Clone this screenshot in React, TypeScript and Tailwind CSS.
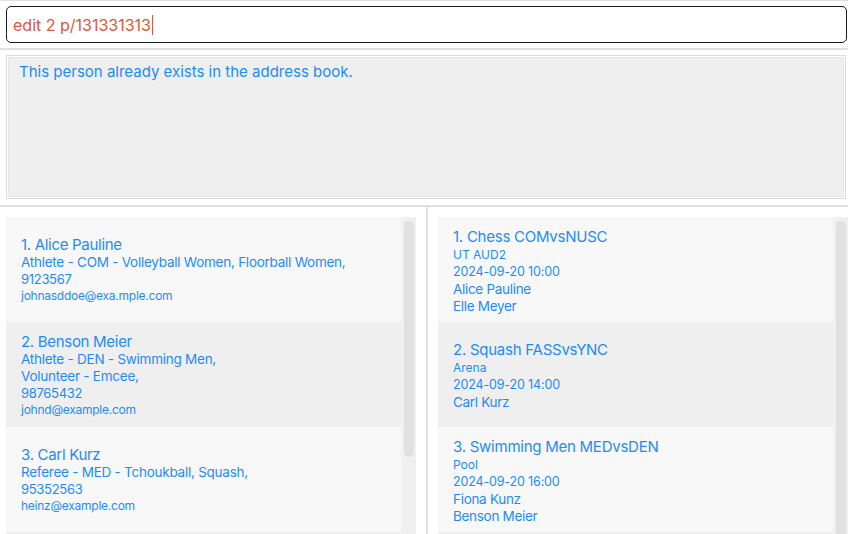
const persons = [
  {
    name: '1. Alice Pauline',
    roles: ['Athlete - COM - Volleyball Women, Floorball Women,'],
    phone: '9123567',
    email: 'johnasddoe@exa.mple.com',
  },
  {
    name: '2. Benson Meier',
    roles: ['Athlete - DEN - Swimming Men,', 'Volunteer - Emcee,'],
    phone: '98765432',
    email: 'johnd@example.com',
  },
  {
    name: '3. Carl Kurz',
    roles: ['Referee - MED - Tchoukball, Squash,'],
    phone: '95352563',
    email: 'heinz@example.com',
  },
];

const events = [
  {
    title: '1. Chess COMvsNUSC',
    venue: 'UT AUD2',
    time: '2024-09-20 10:00',
    people: ['Alice Pauline', 'Elle Meyer'],
  },
  {
    title: '2. Squash FASSvsYNC',
    venue: 'Arena',
    time: '2024-09-20 14:00',
    people: ['Carl Kurz'],
  },
  {
    title: '3. Swimming Men MEDvsDEN',
    venue: 'Pool',
    time: '2024-09-20 16:00',
    people: ['Fiona Kunz', 'Benson Meier'],
  },
];

const Scrollbar = ({ thumb }: { thumb: string }) => (
  <div className="w-[15px] shrink-0 bg-[#f0f0f0] pt-[4px] pl-[3px]">
    <div className={`w-[10px] rounded-[5px] bg-[#e0e0e0] ${thumb}`} />
  </div>
);

export default function App() {
  return (
    <div
      className="w-[848px] h-[534px] overflow-hidden bg-white flex flex-col text-[#1e8cf5]"
      style={{ fontFamily: 'Inter, "Noto Sans", sans-serif' }}
    >
      <div className="h-[1px] bg-[#e0e0e0]" />

      {/* command box */}
      <div className="pt-[5px] pl-[6px] pr-[1px]">
        <div className="h-[37px] rounded-[5px] border border-[#1a1a1a] bg-white flex items-center pl-[6px]">
          <span className="text-[16px] text-[#d75a40]">edit 2 p/131331313</span>
          <span className="ml-[1px] w-[1px] h-[20px] bg-[#d75a40]" />
        </div>
      </div>

      <div className="mt-[5px] h-[2px] bg-[#e0e0e0]" />

      {/* result display */}
      <div className="pt-[5px] pl-[6px] pr-[2px]">
        <div className="h-[144px] border border-[#dcdcdc] p-[1px]">
          <div className="h-full bg-[#efefef] border border-[#e6e6e6] px-[10px] pt-[3px] text-[15px]">
            This person already exists in the address book.
          </div>
        </div>
      </div>

      <div className="mt-[6px] h-[2px] bg-[#e0e0e0]" />

      {/* lists */}
      <div className="flex flex-1 min-h-0">
        <div className="w-[426px] pt-[10px] pl-[6px] pr-[10px] flex">
          <div className="flex-1 flex flex-col">
            {persons.map((p, i) => (
              <div
                key={p.name}
                className={`h-[105px] shrink-0 flex flex-col justify-center pl-[15px] ${i % 2 === 0 ? 'bg-[#f8f8f8]' : 'bg-[#efefef]'}`}
              >
                <div className="text-[15px] leading-[19px] tracking-[-0.3px]">{p.name}</div>
                {p.roles.map((r) => (
                  <div key={r} className="text-[13.5px] leading-[17px] tracking-[-0.25px]">{r}</div>
                ))}
                <div className="text-[13px] leading-[16px] tracking-[-0.3px]">{p.phone}</div>
                <div className="text-[12px] leading-[17px] tracking-[-0.25px]">{p.email}</div>
              </div>
            ))}
            <div className="flex-1 bg-[#efefef]" />
          </div>
          <Scrollbar thumb="h-[236px]" />
        </div>

        <div className="w-[2px] bg-[#e0e0e0]" />

        <div className="flex-1 pt-[10px] pl-[10px] flex">
          <div className="flex-1 flex flex-col">
            {events.map((e, i) => (
              <div
                key={e.title}
                className={`h-[105px] shrink-0 flex flex-col justify-center pl-[15px] pt-[2px] ${i % 2 === 0 ? 'bg-[#f8f8f8]' : 'bg-[#efefef]'}`}
              >
                <div className="text-[15px] leading-[19px] tracking-[-0.25px]">{e.title}</div>
                <div className="text-[12px] leading-[17px]">{e.venue}</div>
                <div className="text-[12.5px] leading-[18px] tracking-[-0.15px]">{e.time}</div>
                {e.people.map((n) => (
                  <div key={n} className="text-[13.5px] leading-[17px] tracking-[-0.3px]">{n}</div>
                ))}
              </div>
            ))}
            <div className="flex-1 bg-[#efefef]" />
          </div>
          <Scrollbar thumb="h-[400px]" />
        </div>
      </div>
    </div>
  );
}
